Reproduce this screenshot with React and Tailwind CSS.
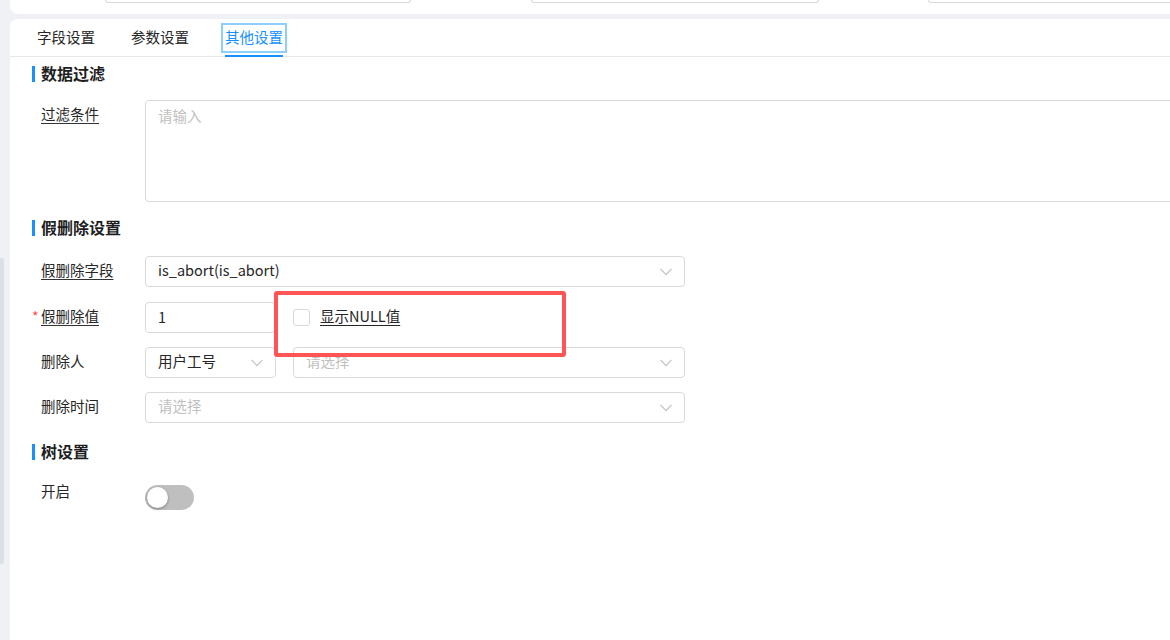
import React from "react";

function Chevron({ className = "" }) {
  return (
    <svg width="12" height="8" viewBox="0 0 12 8" className={className} fill="none">
      <polyline points="0.5,0.8 6,6.6 11.5,0.8" stroke="#bfbfbf" strokeWidth="1.1" />
    </svg>
  );
}

function SectionTitle({ children, className = "" }) {
  return (
    <div className={"flex items-center gap-[6px] h-[22px] " + className}>
      <span className="w-[3px] h-[16px] bg-[#1890ff]" />
      <span className="text-[16px] font-bold text-[#1f1f1f] leading-[20px] pb-[2px]">{children}</span>
    </div>
  );
}

function Label({ children, underline = false, required = false }) {
  return (
    <div className="relative w-[104px] shrink-0 leading-[28px] text-[14.5px] text-[#262626]">
      {required && (
        <span className="absolute left-[-9px] top-0 text-[#ff4d4f] text-[14px]">*</span>
      )}
      <span className={underline ? "underline underline-offset-[3px] decoration-[#333]" : ""}>
        {children}
      </span>
    </div>
  );
}

function Select({ width, value, placeholder }) {
  return (
    <div
      className={
        "h-[31px] border border-[#d9d9d9] rounded-[4px] bg-white flex items-center justify-between pl-[12px] pr-[12px] shrink-0 " +
        width
      }
    >
      {value ? (
        <span className="text-[14.5px] text-[#262626] pb-[3px]">{value}</span>
      ) : (
        <span className="text-[14.5px] text-[#bfbfbf] pb-[3px]">{placeholder}</span>
      )}
      <Chevron />
    </div>
  );
}

export default function App() {
  return (
    <div className="relative w-[1170px] h-[640px] overflow-hidden bg-[#f0f1f5] flex font-['Noto_Sans_CJK_SC','Noto_Sans',sans-serif]">
      {/* left gutter with scroll thumb */}
      <div className="w-[10px] shrink-0 flex flex-col">
        <div className="mt-[258px] h-[306px] w-[4px] bg-[#dcdfe5] rounded-r-[2px]" />
      </div>

      <div className="flex-1 flex flex-col min-w-0">
        {/* bottom of the filter card above */}
        <div className="h-[14px] bg-white rounded-bl-[8px] flex shrink-0 overflow-hidden">
          <div className="ml-[95px] w-[306px] h-[3px] shrink-0 border border-t-0 border-[#d9d9d9] rounded-b-[4px]" />
          <div className="ml-[120px] w-[288px] h-[3px] shrink-0 border border-t-0 border-[#d9d9d9] rounded-b-[4px]" />
          <div className="ml-[109px] w-[300px] h-[3px] shrink-0 border border-t-0 border-[#d9d9d9] rounded-b-[4px]" />
        </div>

        <div className="mt-[5px] flex-1 bg-white rounded-tl-[8px] flex flex-col">
          {/* tabs */}
          <div className="h-[38px] border-b border-[#e8e8e8] flex pl-[27px] gap-[36px] text-[14.5px] shrink-0">
            <div className="flex items-center pb-[2px] text-[#262626]">字段设置</div>
            <div className="flex items-center pb-[2px] text-[#262626]">参数设置</div>
            <div className="relative flex items-center pb-[2px] text-[#1890ff]">
              其他设置
              <span className="absolute left-[-4px] right-[-4px] top-[4px] h-[30px] border-2 border-[#8ccfff]" />
              <span className="absolute left-0 right-0 bottom-[-1px] h-[2px] bg-[#1890ff]" />
            </div>
          </div>

          <div className="pl-[22px] flex flex-col">
            <SectionTitle className="mt-[6px]">数据过滤</SectionTitle>

            <div className="mt-[15px] pl-[9px] flex items-start">
              <Label underline>过滤条件</Label>
              <div className="w-[1100px] h-[102px] shrink-0 border border-[#d9d9d9] rounded-[4px] px-[12px] pt-[3px] text-[14.5px] text-[#bfbfbf] leading-[24px]">
                请输入
              </div>
            </div>

            <SectionTitle className="mt-[15px]">假删除设置</SectionTitle>

            <div className="mt-[17px] pl-[9px] flex items-start">
              <Label underline>假删除字段</Label>
              <Select width="w-[540px]" value="is_abort(is_abort)" />
            </div>

            <div className="mt-[15px] pl-[9px] flex items-start">
              <Label underline required>假删除值</Label>
              <div className="w-[131px] h-[31px] shrink-0 border border-[#d9d9d9] rounded-[4px] flex items-center pl-[12px] pb-[2px] text-[14.5px] text-[#262626]">
                1
              </div>
              <div className="ml-[17px] h-[31px] flex items-center gap-[10px]">
                <span className="w-[17px] h-[17px] border border-[#d9d9d9] rounded-[3px] bg-white" />
                <span className="text-[14.5px] text-[#262626] underline underline-offset-[3px] pb-[4px]">显示NULL值</span>
              </div>
            </div>

            <div className="mt-[14px] pl-[9px] flex items-start">
              <Label>删除人</Label>
              <Select width="w-[131px]" value="用户工号" />
              <div className="ml-[17px]">
                <Select width="w-[392px]" placeholder="请选择" />
              </div>
            </div>

            <div className="mt-[14px] pl-[9px] flex items-start">
              <Label>删除时间</Label>
              <Select width="w-[540px]" placeholder="请选择" />
            </div>

            <SectionTitle className="mt-[18px]">树设置</SectionTitle>

            <div className="mt-[14px] pl-[9px] flex items-start">
              <Label>开启</Label>
              <div className="mt-[8px] w-[49px] h-[25px] rounded-full bg-[#bfbfbf] relative shrink-0">
                <span className="absolute left-[2px] top-[2px] w-[21px] h-[21px] rounded-full bg-white shadow-[0_1px_3px_rgba(0,0,0,0.35)]" />
              </div>
            </div>
          </div>
        </div>
      </div>

      {/* highlight box around the NULL option */}
      <div className="absolute left-[274px] top-[291px] w-[292px] h-[66px] border-4 border-[#ff5555] rounded-[3px] pointer-events-none" />
    </div>
  );
}
